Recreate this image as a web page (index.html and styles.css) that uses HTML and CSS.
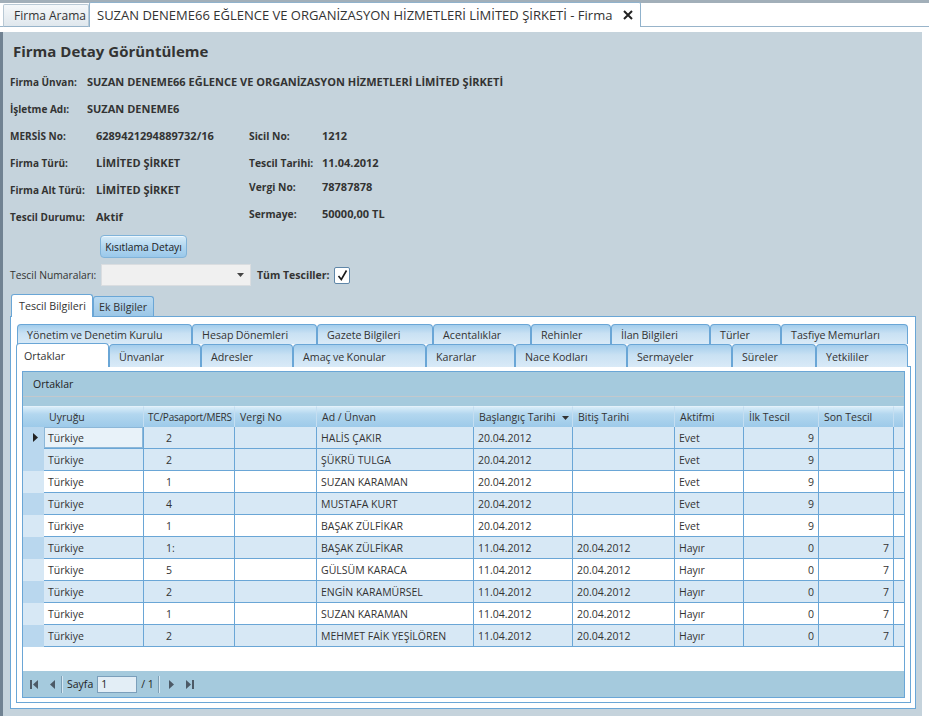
FILE: index.html
```html
<!DOCTYPE html>
<html lang="tr">
<head>
<meta charset="utf-8">
<title>Firma Detay</title>
<link rel="stylesheet" href="styles.css">
</head>
<body>
<div class="app">
  <div class="topstrip"></div>
  <div class="doctabs">
    <div class="doctab">Firma Arama</div>
    <div class="doctab active">SUZAN DENEME66 EĞLENCE VE ORGANİZASYON HİZMETLERİ LİMİTED ŞİRKETİ - Firma
      <svg class="close" width="10" height="10" viewBox="0 0 10 10"><path d="M1 1L9 9M9 1L1 9" stroke="#222" stroke-width="2"/></svg>
    </div>
  </div>
  <div class="gap"></div>
  <div class="panel">
    <h1 class="title">Firma Detay Görüntüleme</h1>
    <div class="info">
      <div class="info-row"><span class="lbl l1">Firma Ünvan:</span><span>SUZAN DENEME66 EĞLENCE VE ORGANİZASYON HİZMETLERİ LİMİTED ŞİRKETİ</span></div>
      <div class="info-row"><span class="lbl l1">İşletme Adı:</span><span>SUZAN DENEME6</span></div>
      <div class="info-row"><span class="lbl l2">MERSİS No:</span><span class="v2">6289421294889732/16</span><span class="lbl l3">Sicil No:</span><span>1212</span></div>
      <div class="info-row"><span class="lbl l2">Firma Türü:</span><span class="v2">LİMİTED ŞİRKET</span><span class="lbl l3">Tescil Tarihi:</span><span>11.04.2012</span></div>
      <div class="info-row"><span class="lbl l2">Firma Alt Türü:</span><span class="v2">LİMİTED ŞİRKET</span><span class="lbl l3 up">Vergi No:</span><span class="up">78787878</span></div>
      <div class="info-row"><span class="lbl l2">Tescil Durumu:</span><span class="v2">Aktif</span><span class="lbl l3 up">Sermaye:</span><span class="up">50000,00 TL</span></div>
    </div>
    <button class="btn">Kısıtlama Detayı</button>
    <div class="combo-row">
      <span class="combo-label">Tescil Numaraları:</span>
      <div class="combo"><svg width="7" height="4" viewBox="0 0 7 4"><path d="M0 0H7L3.5 4Z" fill="#444"/></svg></div>
      <span class="all-label">Tüm Tesciller:</span>
      <div class="check"><svg width="13" height="13" viewBox="0 0 13 13"><path d="M2.5 7 L5.3 10.5 L10.5 1.5" fill="none" stroke="#1a1a1a" stroke-width="1.6"/></svg></div>
    </div>
    <div class="otabs">
      <div class="otab active">Tescil Bilgileri</div>
      <div class="otab">Ek Bilgiler</div>
    </div>
    <div class="obody">
      <div class="itabs row1">
        <div class="itab">Yönetim ve Denetim Kurulu</div>
        <div class="itab">Hesap Dönemleri</div>
        <div class="itab">Gazete Bilgileri</div>
        <div class="itab">Acentalıklar</div>
        <div class="itab">Rehinler</div>
        <div class="itab">İlan Bilgileri</div>
        <div class="itab">Türler</div>
        <div class="itab">Tasfiye Memurları</div>
      </div>
      <div class="itabs row2">
        <div class="itab active">Ortaklar</div>
        <div class="itab">Ünvanlar</div>
        <div class="itab">Adresler</div>
        <div class="itab">Amaç ve Konular</div>
        <div class="itab">Kararlar</div>
        <div class="itab">Nace Kodları</div>
        <div class="itab">Sermayeler</div>
        <div class="itab">Süreler</div>
        <div class="itab">Yetkililer</div>
      </div>
      <div class="ibody">
        <div class="grid">
          <div class="grid-title">Ortaklar</div>
          <div class="grid-line"></div>
          <div class="grid-space"></div>
          <table class="gtable">
            <colgroup>
              <col class="c-ind"><col class="c-uy"><col class="c-tc"><col class="c-vn"><col class="c-ad"><col class="c-bas"><col class="c-bit"><col class="c-akt"><col class="c-ilk"><col class="c-son"><col class="c-fill">
            </colgroup>
            <thead>
              <tr>
                <th class="ind"></th>
                <th>Uyruğu</th>
                <th class="tch">TC/Pasaport/MERS</th>
                <th>Vergi No</th>
                <th>Ad / Ünvan</th>
                <th>Başlangıç Tarihi <svg class="sort" width="7" height="4" viewBox="0 0 7 4"><path d="M0 0H7L3.5 4Z" fill="#333"/></svg></th>
                <th>Bitiş Tarihi</th>
                <th>Aktifmi</th>
                <th>İlk Tescil</th>
                <th>Son Tescil</th>
                <th class="fill"></th>
              </tr>
            </thead>
            <tbody>
              <tr class="alt"><td class="ind"><svg width="5" height="9" viewBox="0 0 5 9"><path d="M0 0L5 4.5L0 9Z" fill="#222"/></svg></td><td class="focus">Türkiye</td><td class="tc">2</td><td></td><td>HALİS ÇAKIR</td><td>20.04.2012</td><td></td><td>Evet</td><td class="num">9</td><td class="num"></td><td class="fill"></td></tr>
              <tr class="alt"><td class="ind"></td><td>Türkiye</td><td class="tc">2</td><td></td><td>ŞÜKRÜ TULGA</td><td>20.04.2012</td><td></td><td>Evet</td><td class="num">9</td><td class="num"></td><td class="fill"></td></tr>
              <tr><td class="ind"></td><td>Türkiye</td><td class="tc">1</td><td></td><td>SUZAN KARAMAN</td><td>20.04.2012</td><td></td><td>Evet</td><td class="num">9</td><td class="num"></td><td class="fill"></td></tr>
              <tr class="alt"><td class="ind"></td><td>Türkiye</td><td class="tc">4</td><td></td><td>MUSTAFA KURT</td><td>20.04.2012</td><td></td><td>Evet</td><td class="num">9</td><td class="num"></td><td class="fill"></td></tr>
              <tr><td class="ind"></td><td>Türkiye</td><td class="tc">1</td><td></td><td>BAŞAK ZÜLFİKAR</td><td>20.04.2012</td><td></td><td>Evet</td><td class="num">9</td><td class="num"></td><td class="fill"></td></tr>
              <tr class="alt"><td class="ind"></td><td>Türkiye</td><td class="tc">1:</td><td></td><td>BAŞAK ZÜLFİKAR</td><td>11.04.2012</td><td>20.04.2012</td><td>Hayır</td><td class="num">0</td><td class="num">7</td><td class="fill"></td></tr>
              <tr><td class="ind"></td><td>Türkiye</td><td class="tc">5</td><td></td><td>GÜLSÜM KARACA</td><td>11.04.2012</td><td>20.04.2012</td><td>Hayır</td><td class="num">0</td><td class="num">7</td><td class="fill"></td></tr>
              <tr class="alt"><td class="ind"></td><td>Türkiye</td><td class="tc">2</td><td></td><td>ENGİN KARAMÜRSEL</td><td>11.04.2012</td><td>20.04.2012</td><td>Hayır</td><td class="num">0</td><td class="num">7</td><td class="fill"></td></tr>
              <tr><td class="ind"></td><td>Türkiye</td><td class="tc">1</td><td></td><td>SUZAN KARAMAN</td><td>11.04.2012</td><td>20.04.2012</td><td>Hayır</td><td class="num">0</td><td class="num">7</td><td class="fill"></td></tr>
              <tr class="alt"><td class="ind"></td><td>Türkiye</td><td class="tc">2</td><td></td><td>MEHMET FAİK YEŞİLÖREN</td><td>11.04.2012</td><td>20.04.2012</td><td>Hayır</td><td class="num">0</td><td class="num">7</td><td class="fill"></td></tr>
            </tbody>
          </table>
          <div class="grid-empty"></div>
          <div class="pager">
            <svg class="pi first" width="8" height="9" viewBox="0 0 8 9"><path d="M0 0H2V9H0Z M8 0V9L3 4.5Z" fill="#4c5a66"/></svg>
            <svg class="pi prev" width="5" height="9" viewBox="0 0 5 9"><path d="M5 0V9L0 4.5Z" fill="#4c5a66"/></svg>
            <span class="psep"></span>
            <span class="ptext">Sayfa</span>
            <div class="pinput">1</div>
            <span class="ptext">/ 1</span>
            <span class="psep"></span>
            <svg class="pi next" width="5" height="9" viewBox="0 0 5 9"><path d="M0 0V9L5 4.5Z" fill="#4c5a66"/></svg>
            <svg class="pi last" width="8" height="9" viewBox="0 0 8 9"><path d="M0 0V9L5 4.5Z M6 0H8V9H6Z" fill="#4c5a66"/></svg>
          </div>
        </div>
      </div>
    </div>
  </div>
</div>
</body>
</html>
```
FILE: styles.css
```css
* { box-sizing: border-box; }
body {
  margin: 0;
  background: #fff;
  font-family: "Open Sans", "Liberation Sans", sans-serif;
  font-size: 10.5px;
  color: #333;
}
.app { width: 929px; height: 716px; overflow: hidden; }
.topstrip { height: 3px; background: #a2afb9; }
.doctabs {
  height: 24px;
  display: flex;
  align-items: flex-end;
  padding-left: 3px;
  border-bottom: 1px solid #98b4ca;
}
.doctab {
  height: 23px;
  margin-bottom: -1px;
  padding: 0 0 0 10px;
  width: 86px;
  display: flex;
  align-items: center;
  font-size: 12px;
  color: #333;
  background: linear-gradient(#f5f8fa, #dfe7ed);
  border: 1px solid #b9c9d5;
  border-bottom-color: #98b4ca;
  border-radius: 2px 2px 0 0;
  white-space: nowrap;
}
.doctab.active {
  height: 25px;
  width: 552px;
  padding-left: 7px;
  font-size: 13px;
  background: #fff;
  border-color: #90b2cc;
  border-bottom: none;
  justify-content: space-between;
  padding-right: 7px;
}
.gap { height: 5px; }
.panel {
  width: 922px;
  height: 684px;
  background: #c5d3dc;
  border-left: 3px solid #708292;
  padding: 8px 0 0 7px;
}
.title {
  margin: 0 0 6px 3px;
  height: 22px;
  line-height: 22px;
  font-size: 15px;
  font-weight: bold;
  color: #333;
}
.info-row {
  display: flex;
  height: 27px;
  align-items: center;
  font-size: 11px;
  font-weight: bold;
  color: #333;
  white-space: nowrap;
}
.lbl { font-size: 10px; }
.l1 { width: 77px; }
.l2 { width: 86px; }
.v2 { width: 153px; }
.l3 { width: 73px; font-size: 10.3px; }
.up { padding-bottom: 6px; }
.btn {
  display: block;
  margin: 5px 0 0 90px;
  width: 87px;
  height: 23px;
  padding: 0;
  border: 1px solid #80b3d9;
  border-radius: 4px;
  background: linear-gradient(#d6ebf8, #b2d6ef 50%, #9ac8ea);
  box-shadow: inset 0 1px 0 #eef7fd;
  font-family: "Open Sans", "Liberation Sans", sans-serif;
  font-size: 10.3px;
  color: #222;
}
.combo-row {
  margin-top: 6px;
  height: 22px;
  display: flex;
  align-items: center;
  white-space: nowrap;
}
.combo-label { width: 91px; font-size: 10.3px; }
.combo {
  width: 150px;
  height: 22px;
  background: #f0f0f0;
  border: 1px solid #dadde0;
  display: flex;
  align-items: center;
  justify-content: flex-end;
  padding-right: 6px;
}
.all-label { width: 77px; margin-left: 6px; font-weight: bold; font-size: 10.5px; }
.check {
  width: 16px;
  height: 17px;
  background: #fff;
  border: 1px solid #5f86a8;
  border-radius: 2px;
  display: flex;
  align-items: center;
  justify-content: center;
}
.otabs {
  margin: 8px 0 0 1px;
  height: 22px;
  display: flex;
  align-items: flex-end;
}
.otab {
  width: 61px;
  height: 20px;
  padding-left: 5px;
  display: flex;
  align-items: center;
  font-size: 10.7px;
  color: #333;
  white-space: nowrap;
  background: linear-gradient(#b9d9f0, #9cc7e7);
  border: 1px solid #6aa6d6;
  border-bottom: none;
  border-radius: 3px 3px 0 0;
}
.otab.active {
  width: 82px;
  height: 23px;
  margin-bottom: -1px;
  padding-left: 7px;
  background: #fff;
  position: relative;
}
.obody {
  width: 906px;
  height: 393px;
  background: #fff;
  border: 1px solid #6aa6d6;
  padding: 7px 4px 5px 5px;
}
.itabs { display: grid; }
.row1 {
  height: 20px;
  margin-left: 1px;
  grid-template-columns: 175px 125px 116px 98px 80px 99px 71px 127px;
}
.row2 {
  height: 22px;
  grid-template-columns: 93px 92px 92px 133px 89px 112px 105px 84px 92px;
}
.itab {
  border: 1px solid #6aa6d6;
  border-bottom: none;
  border-radius: 4px 4px 0 0;
  background: linear-gradient(#a3cdec, #c9e1f3 45%, #d9eaf7);
  padding-left: 9px;
  display: flex;
  align-items: center;
  font-size: 10.7px;
  word-spacing: -0.5px;
  color: #333;
  white-space: nowrap;
  overflow: hidden;
}
.row2 .itab { padding-top: 2px; }
.itab.active {
  background: #fff;
  height: 24px;
  margin-top: -1px;
  position: relative;
  padding-left: 7px;
  padding-top: 0;
  align-items: center;
}
.ibody {
  width: 895px;
  height: 337px;
  border: 1px solid #6aa6d6;
  padding: 4px 5px;
}
.grid {
  width: 883px;
  height: 327px;
  border: 1px solid #6aa6d6;
  background: #fff;
}
.grid-title {
  height: 24px;
  line-height: 24px;
  padding-left: 10px;
  background: #a5cadd;
  color: #222;
}
.grid-line { height: 1px; background: #c3c8cc; }
.grid-space { height: 9px; background: #a5cadd; }
.gtable {
  width: 881px;
  table-layout: fixed;
  border-collapse: separate;
  border-spacing: 0;
}
.c-ind { width: 21px; }
.c-uy { width: 100px; }
.c-tc { width: 91px; }
.c-vn { width: 82px; }
.c-ad { width: 157px; }
.c-bas { width: 99px; }
.c-bit { width: 102px; }
.c-akt { width: 69px; }
.c-ilk { width: 75px; }
.c-son { width: 75px; }
.c-fill { width: 10px; }
.gtable th {
  height: 21px;
  padding: 0 0 0 5px;
  text-align: left;
  font-weight: normal;
  color: #333;
  white-space: nowrap;
  overflow: hidden;
  background: linear-gradient(#d9edf9, #b3d7ef 35%, #9dcae9);
  border-right: 1px solid #c4def1;
  border-top: 1px solid #e4f1fa;
}
.gtable th.tch { padding-left: 4px; font-size: 10px; letter-spacing: -0.2px; }
.gtable th.ind { border-right: none; }
.sort { margin-left: 4px; vertical-align: middle; }
.gtable td {
  height: 22px;
  padding: 0 4px;
  white-space: nowrap;
  overflow: hidden;
  background: #fff;
  border-bottom: 1px solid #6aa6d6;
  border-right: 1px solid #6aa6d6;
  color: #333;
}
.gtable tr.alt td { background: #d7e8f5; }
.gtable td.ind {
  background: #d7e8f5;
  border-bottom-color: #d7e8f5;
  border-right: none;
  padding: 0 0 0 10px;
}
.gtable tr.alt td.ind { background: #b9d7ee; border-bottom-color: #b9d7ee; }
.gtable td.ind svg { display: block; }
.gtable td.fill { border-right: none; padding: 0; }
.gtable td.tc { padding-left: 22px; }
.gtable td.num { text-align: right; }
.gtable tr.alt td.focus {
  background: #e8f2f9;
  box-shadow: inset 0 0 0 1px #8cb7d8;
}
.grid-empty { height: 24px; background: #fff; }
.pager {
  height: 26px;
  background: #a5cadd;
  display: flex;
  align-items: center;
  padding-left: 7px;
  color: #222;
}
.pi { display: block; }
.first { margin-right: 12px; }
.prev { margin-right: 6px; }
.psep {
  width: 2px;
  height: 17px;
  border-left: 1px solid #7d9fb5;
  border-right: 1px solid #d6e8f3;
}
.ptext { margin: 0 4px; }
.pinput {
  width: 40px;
  height: 17px;
  background: #e3eef6;
  border: 1px solid #7b9fbb;
  padding-left: 3px;
  line-height: 15px;
}
.next { margin-left: 9px; margin-right: 12px; }
```
